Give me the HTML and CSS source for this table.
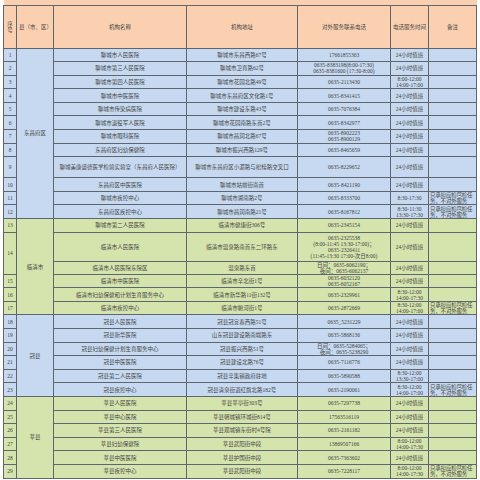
FILE: index.html
```html
<!DOCTYPE html>
<html lang="zh">
<head>
<meta charset="utf-8">
<link rel="stylesheet" href="styles.css">
</head>
<body>
<table class="t">
<colgroup>
<col class="c1"><col class="c2"><col class="c3"><col class="c4"><col class="c5"><col class="c6"><col class="c7">
</colgroup>
<tr class="top"><td colspan="7"></td></tr>
<tr class="hd">
<td>序<br>号</td><td class="cty">县（市、区）</td><td>机构名称</td><td>机构地址</td><td>对外服务联系电话</td><td>电话服务时间</td><td>备注</td>
</tr>
<tr class="b"><td>1</td><td rowspan="12" class="grp">东昌府区</td><td>聊城市人民医院</td><td>聊城市东昌西路67号</td><td>17661855363</td><td>24小时值班</td><td></td></tr>
<tr class="b"><td>2</td><td>聊城市第三人民医院</td><td>聊城市卫育路62号</td><td>0635-8383198(8:00-17:30)<br>0635-8381600 (17:30-8:00)</td><td>24小时值班</td><td></td></tr>
<tr class="b"><td>3</td><td>聊城市第四人民医院</td><td>聊城市花园北路49号</td><td>0635-2113430</td><td>8:00-12:00<br>14:00-17:00</td><td></td></tr>
<tr class="b"><td>4</td><td>聊城市中医医院</td><td>聊城市东昌府区文化路1号</td><td>0635-8341415</td><td>24小时值班</td><td></td></tr>
<tr class="b"><td>5</td><td>聊城市传染病医院</td><td>聊城市建设东路43号</td><td>0635-7076384</td><td>24小时值班</td><td></td></tr>
<tr class="b"><td>6</td><td>聊城市退役军人医院</td><td>聊城市花园南路东首2号</td><td>0635-8342977</td><td>24小时值班</td><td></td></tr>
<tr class="b"><td>7</td><td>聊城市眼科医院</td><td>聊城市昌润北路67号</td><td>0635-8902223<br>0635-8900129</td><td>24小时值班</td><td></td></tr>
<tr class="b"><td>8</td><td>东昌府区妇幼保健院</td><td>聊城市振兴西路129号</td><td>0635-8465659</td><td>24小时值班</td><td></td></tr>
<tr class="b r9"><td>9</td><td>聊城美康盛德医学检验实验室（东昌府人民医院）</td><td>聊城市东昌府区小湄路与松桂路交叉口</td><td>0635-8229652</td><td>24小时值班</td><td></td></tr>
<tr class="b"><td>10</td><td>东昌府区中医医院</td><td>聊城市站前街南首</td><td>0635-8421190</td><td>24小时值班</td><td></td></tr>
<tr class="b"><td>11</td><td>聊城市疾控中心</td><td>聊城市湖南路2号</td><td>0635-8333700</td><td>8:30-17:30</td><td class="note">只承担应检尽检任<br>务，不对外服务</td></tr>
<tr class="b"><td>12</td><td>东昌府区疾控中心</td><td>聊城市昌润南路21号</td><td>0635-8167812</td><td>8:30-11:30<br>13:30-17:30</td><td class="note">只承担应检尽检任<br>务，不对外服务</td></tr>
<tr class="g"><td>13</td><td rowspan="6" class="grp">临清市</td><td>聊城市第二人民医院</td><td>临清市健康街306号</td><td>0635-2345154</td><td>24小时值班</td><td></td></tr>
<tr class="g r14a"><td rowspan="2">14</td><td>临清市人民医院</td><td>临清市温泉路南首东二环路东</td><td>0635-2325538<br>(8:00-11:45 13:30-17:00)；<br>0635-2326411<br>(11:45-13:30 17:00-次日8:00)</td><td>24小时值班</td><td></td></tr>
<tr class="g r14b"><td>临清市人民医院东院区</td><td>温泉路东首</td><td>日间：0635-6062190；<br>夜间：0635-6062137</td><td>24小时值班</td><td></td></tr>
<tr class="g"><td>15</td><td>临清市中医医院</td><td>临清市辛北街1号</td><td>0635-6032120<br>0635-6052167</td><td>24小时值班</td><td></td></tr>
<tr class="g"><td>16</td><td>临清市妇幼保健和计划生育服务中心</td><td>临清市新华路11街132号</td><td>0635-2329961</td><td>8:30-12:00<br>14:00-17:30</td><td></td></tr>
<tr class="g"><td>17</td><td>临清市疾控中心</td><td>临清市鲍河街1号</td><td>0635-2872669</td><td>8:30-12:00<br>14:00-17:00</td><td class="note">只承担应检尽检任<br>务，不对外服务</td></tr>
<tr class="b"><td>18</td><td rowspan="6" class="grp">冠县</td><td>冠县人民医院</td><td>冠县冠宜春西路51号</td><td>0635_5231229</td><td>24小时值班</td><td></td></tr>
<tr class="b"><td>19</td><td>冠县新华医院</td><td>山东冠县建设路南端路东</td><td>0635-5868136</td><td>24小时值班</td><td></td></tr>
<tr class="b"><td>20</td><td>冠县妇幼保健计划生育服务中心</td><td>冠县振兴西路51号</td><td>日间：0635-5284065；<br>夜间：0635-5238290</td><td>24小时值班</td><td></td></tr>
<tr class="b"><td>21</td><td>冠县中医医院</td><td>冠县建设北路76号</td><td>0635-7116776</td><td>24小时值班</td><td></td></tr>
<tr class="b"><td>22</td><td>冠县第二人民医院</td><td>冠县辛集镇政府驻地</td><td>0635-5890588</td><td>8:30-12:00<br>13:30-17:00</td><td></td></tr>
<tr class="b"><td>23</td><td>冠县疾控中心</td><td>冠县清泉街道红旗北路182号</td><td>0635-2190061</td><td>8:30-12:00<br>14:00-17:00</td><td class="note">只承担应检尽检任<br>务，不对外服务</td></tr>
<tr class="g"><td>24</td><td rowspan="6" class="grp">莘县</td><td>莘县人民医院</td><td>莘县莘亭街303号</td><td>0635-7297738</td><td>24小时值班</td><td></td></tr>
<tr class="g"><td>25</td><td>莘县中心医院</td><td>莘县朝城镇环城街814号</td><td>17563516119</td><td>24小时值班</td><td></td></tr>
<tr class="g"><td>26</td><td>莘县第三人民医院</td><td>莘县观城镇东街村4号院</td><td>0635-2161182</td><td>24小时值班</td><td></td></tr>
<tr class="g"><td>27</td><td>莘县妇幼保健院</td><td>莘县武阳街中段</td><td>13869507166</td><td>8:00-12:00<br>14:00-17:30</td><td></td></tr>
<tr class="g"><td>28</td><td>莘县中医医院</td><td>莘县护国街中段</td><td>0635-7363602</td><td>24小时值班</td><td></td></tr>
<tr class="g"><td>29</td><td>莘县疾控中心</td><td>莘县武阳街中段</td><td>0635-7228117</td><td>8:00-12:00<br>14:00-17:30</td><td class="note">只承担应检尽检任<br>务，不对外服务</td></tr>
</table>
</body>
</html>
```

FILE: styles.css
```css
html, body {
  margin: 0;
  padding: 0;
  background: #ffffff;
}

.t {
  border-collapse: collapse;
  table-layout: fixed;
  width: 473px;
  margin-left: 3px;
  font-family: "Liberation Serif", "Noto Sans CJK SC", serif;
  font-size: 5.5px;
  line-height: 6px;
  color: #444444;
}

.c1 { width: 13px; }
.c2 { width: 37px; }
.c3 { width: 133px; }
.c4 { width: 111px; }
.c5 { width: 93px; }
.c6 { width: 38px; }
.c7 { width: 48px; }

.t td {
  border: 1px solid #5e6670;
  padding: 0;
  text-align: center;
  vertical-align: middle;
  white-space: nowrap;
  overflow: hidden;
}

.t tr {
  height: 13.6px;
}

.top {
  background: #fad0b1;
}

.t .top {
  height: 5px;
}

.top td {
  border-top: none;
  border-left: none;
  border-right: none;
}

.hd {
  background: #fad0b1;
}

.t .hd {
  height: 43px;
}

.hd .cty {
  text-align: left;
  padding-left: 2px;
}

.b {
  background: #c6d9f0;
}

.g {
  background: #d5e3ad;
}

.t .r9 {
  height: 21px;
}

.t .r14a {
  height: 29px;
}

.t .r14b {
  height: 13px;
}

.t .note {
  text-align: left;
  padding: 0 0 0 1px;
  letter-spacing: -0.2px;
}

.grp {
  text-align: center;
}
```
